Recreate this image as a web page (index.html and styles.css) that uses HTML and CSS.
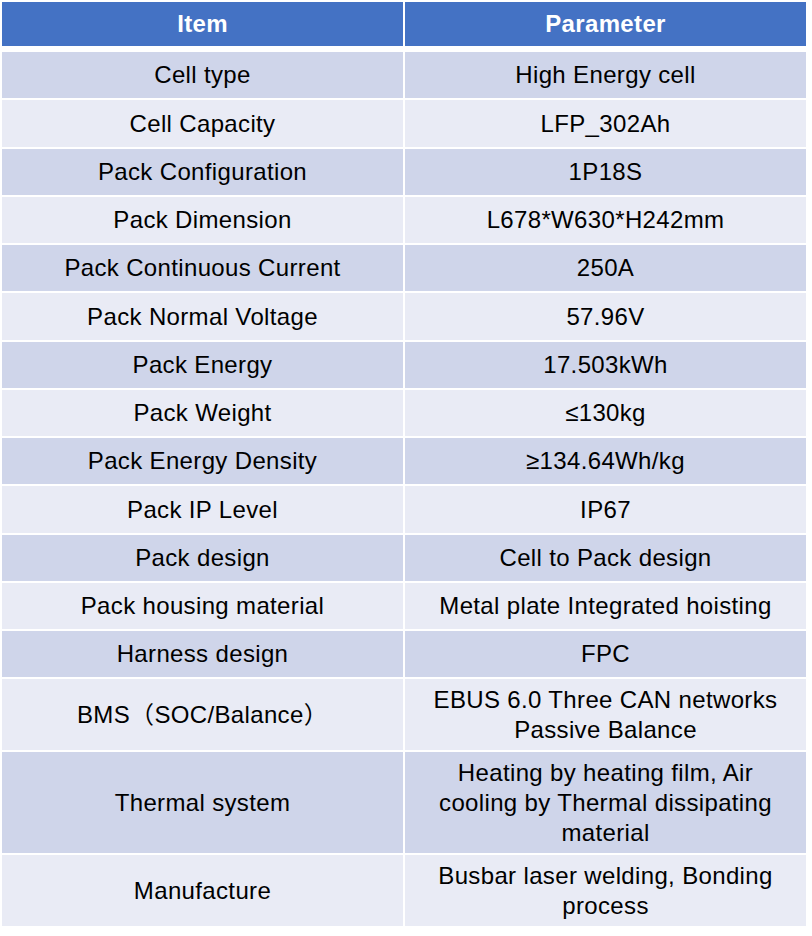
FILE: index.html
```html
<!DOCTYPE html>
<html>
<head>
<meta charset="utf-8">
<link rel="stylesheet" href="styles.css">
</head>
<body>
<div class="table">
  <div class="cell head">Item</div>
  <div class="cell head">Parameter</div>

  <div class="cell odd">Cell type</div><div class="cell odd">High Energy cell</div>
  <div class="cell even">Cell Capacity</div><div class="cell even">LFP_302Ah</div>
  <div class="cell odd">Pack Configuration</div><div class="cell odd">1P18S</div>
  <div class="cell even">Pack Dimension</div><div class="cell even">L678*W630*H242mm</div>
  <div class="cell odd">Pack Continuous Current</div><div class="cell odd">250A</div>
  <div class="cell even">Pack Normal Voltage</div><div class="cell even">57.96V</div>
  <div class="cell odd">Pack Energy</div><div class="cell odd">17.503kWh</div>
  <div class="cell even">Pack Weight</div><div class="cell even">≤130kg</div>
  <div class="cell odd">Pack Energy Density</div><div class="cell odd">≥134.64Wh/kg</div>
  <div class="cell even">Pack IP Level</div><div class="cell even">IP67</div>
  <div class="cell odd">Pack design</div><div class="cell odd">Cell to Pack design</div>
  <div class="cell even">Pack housing material</div><div class="cell even">Metal plate Integrated hoisting</div>
  <div class="cell odd">Harness design</div><div class="cell odd">FPC</div>
  <div class="cell even">BMS（SOC/Balance）</div><div class="cell even">EBUS 6.0 Three CAN networks Passive Balance</div>
  <div class="cell odd">Thermal system</div><div class="cell odd">Heating by heating film, Air cooling by Thermal dissipating material</div>
  <div class="cell even">Manufacture</div><div class="cell even">Busbar laser welding, Bonding process</div>
</div>
</body>
</html>
```
FILE: styles.css
```css
html, body {
  margin: 0;
  padding: 0;
  background: #ffffff;
}
body {
  padding: 2px 0 0 2px;
}
.table {
  display: grid;
  width: 804px;
  grid-template-columns: 401px 401px;
  grid-template-rows: 48px repeat(13, 46.25px) 71px 101px 71px;
  column-gap: 2px;
  row-gap: 2px;
  font-family: "Liberation Sans", Arial, "Noto Sans CJK SC", sans-serif;
  font-size: 24px;
  letter-spacing: 0.35px;
  line-height: 29.6px;
  color: #000000;
}
.cell {
  display: flex;
  align-items: center;
  justify-content: center;
  text-align: center;
  padding: 0 20px;
}
.head {
  background: #4472c4;
  color: #ffffff;
  font-weight: bold;
  margin-bottom: 4px;
}
.odd {
  background: #cfd5ea;
}
.even {
  background: #e9ebf5;
}
```
